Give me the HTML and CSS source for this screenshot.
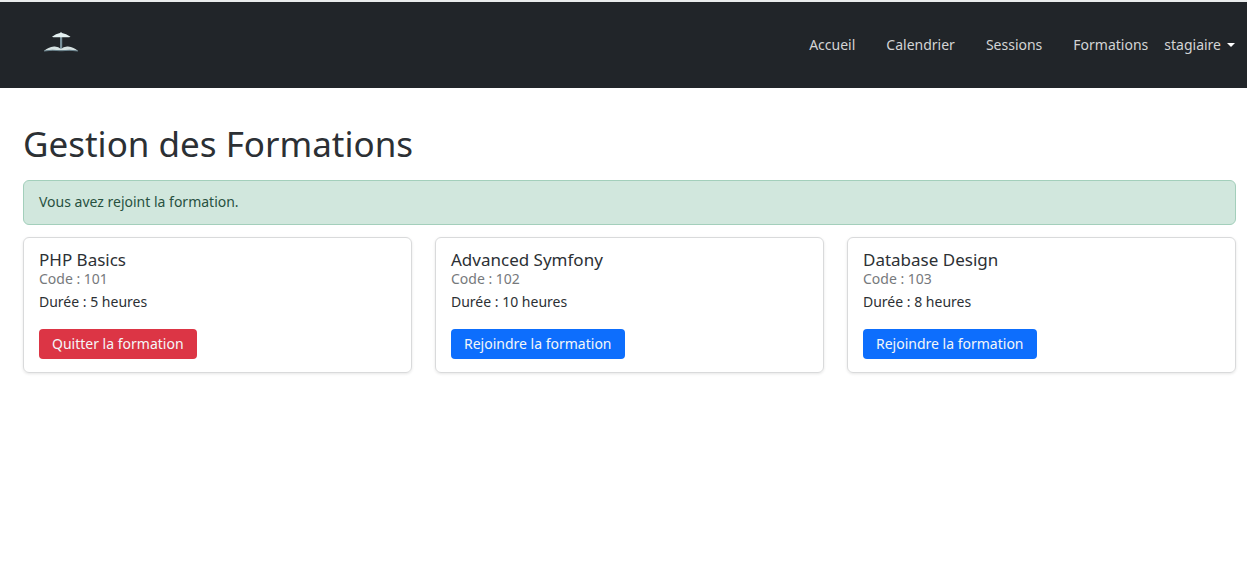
FILE: index.html
```html
<!DOCTYPE html>
<html lang="fr">
<head>
<meta charset="utf-8">
<meta name="viewport" content="width=device-width, initial-scale=1">
<title>Gestion des Formations</title>
<link rel="stylesheet" href="styles.css">
</head>
<body>
<header class="navbar">
  <a class="brand" href="#" aria-label="Accueil du site">
    <svg class="brand-logo" viewBox="0 0 36 22" aria-hidden="true">
      <rect x="17" y="4" width="2.200" height="14" fill="#78909a"/>
      <path d="M9 4.800Q13 1.500 17 1L18 0L19 1Q23 1.500 27.500 4.800Q27 5.500 25 5.200H11.500Q9.500 5.500 9 4.800Z" fill="#e4f1f1"/>
      <path d="M1 19Q5 15.300 11 14.500Q15.500 14.200 18 17Q20.500 14.200 25 14.500Q31 15.300 35 19Q26 17.600 19.500 18.500H16.500Q10 17.600 1 19Z" fill="#d5e1e1"/>
      <path d="M1 19Q10 17.600 16.500 18.700H19.500Q26 17.600 35 19" fill="none" stroke="#68818b" stroke-width="1"/>
    </svg>
  </a>
  <nav class="nav">
    <a class="nav-link" href="#">Accueil</a>
    <a class="nav-link" href="#">Calendrier</a>
    <a class="nav-link" href="#">Sessions</a>
    <a class="nav-link" href="#">Formations</a>
    <button class="user-menu" type="button" aria-haspopup="true">stagiaire<span class="caret"></span></button>
  </nav>
</header>
<main class="content">
  <h1 class="page-title">Gestion des Formations</h1>
  <div class="alert" role="alert">Vous avez rejoint la formation.</div>
  <div class="cards">
    <article class="card">
      <h2 class="card-title">PHP Basics</h2>
      <p class="card-code">Code : 101</p>
      <p class="card-text">Durée : 5 heures</p>
      <button class="btn btn-danger" type="button">Quitter la formation</button>
    </article>
    <article class="card">
      <h2 class="card-title">Advanced Symfony</h2>
      <p class="card-code">Code : 102</p>
      <p class="card-text">Durée : 10 heures</p>
      <button class="btn btn-primary" type="button">Rejoindre la formation</button>
    </article>
    <article class="card">
      <h2 class="card-title">Database Design</h2>
      <p class="card-code">Code : 103</p>
      <p class="card-text">Durée : 8 heures</p>
      <button class="btn btn-primary" type="button">Rejoindre la formation</button>
    </article>
  </div>
</main>
</body>
</html>
```
FILE: styles.css
```css
* {
  box-sizing: border-box;
}

body {
  margin: 0;
  background: #fff;
  color: #2c3034;
  font-family: "Noto Sans", "Open Sans", sans-serif;
  font-size: 14px;
  line-height: 20px;
}

.navbar {
  display: flex;
  align-items: flex-start;
  justify-content: space-between;
  padding: 30px 12px 33px 43px;
  border-top: 2px solid #e9ecec;
  background: #212529;
}

.brand {
  display: flex;
}

.brand-logo {
  width: 36px;
  height: 22px;
}

.nav {
  display: flex;
  align-items: center;
  gap: 31px;
  padding-top: 3px;
}

.nav-link {
  color: #d3d4d5;
  text-decoration: none;
}

.user-menu {
  display: flex;
  align-items: center;
  gap: 6px;
  margin-left: -15px;
  padding: 0;
  border: 0;
  background: none;
  color: #d3d4d5;
  font: inherit;
}

.caret {
  border-top: 4px solid #fff;
  border-right: 4px solid transparent;
  border-left: 4px solid transparent;
}

.content {
  padding: 36px 11px 36px 23px;
}

.page-title {
  margin: 0 0 16px;
  font-size: 35px;
  font-weight: 400;
  line-height: 40px;
}

.alert {
  margin-bottom: 12px;
  padding: 11px 15px 12px;
  border: 1px solid #a3cfbb;
  border-radius: 6px;
  background: #d1e7dd;
  color: #28513f;
}

.cards {
  display: grid;
  grid-template-columns: repeat(3, 1fr);
  gap: 23px;
}

.card {
  padding: 12px 15px 13px;
  border: 1px solid #d9dadb;
  border-radius: 6px;
  box-shadow: 0 1px 3px rgba(0, 0, 0, 0.1);
}

.card-title {
  margin: 0;
  font-size: 17px;
  font-weight: 400;
  line-height: 20px;
}

.card-code {
  margin: 0 0 4px;
  color: #76797c;
  line-height: 18px;
}

.card-text {
  margin: 0 0 17px;
}

.btn {
  padding: 5px 13px;
  border: 0;
  border-radius: 4px;
  color: #f4f6f8;
  font: inherit;
}

.btn-danger {
  background: #dc3545;
}

.btn-primary {
  background: #0d6efd;
}
```
